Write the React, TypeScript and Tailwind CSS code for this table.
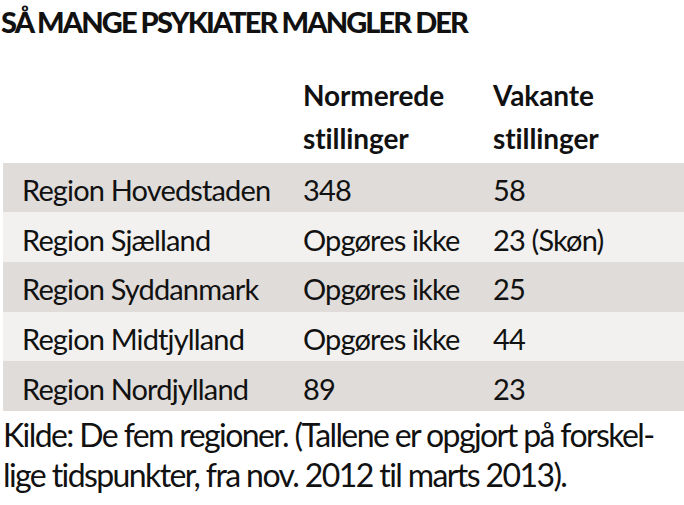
import React from "react";

const rows: [string, string, string][] = [
  ["Region Hovedstaden", "348", "58"],
  ["Region Sjælland", "Opgøres ikke", "23 (Skøn)"],
  ["Region Syddanmark", "Opgøres ikke", "25"],
  ["Region Midtjylland", "Opgøres ikke", "44"],
  ["Region Nordjylland", "89", "23"],
];

export default function App() {
  return (
    <div className="w-[684px] h-[505px] bg-white text-[#111] font-['Lato','Liberation_Sans',sans-serif] overflow-hidden">
      <h1 className="pt-[4px] pl-[1px] text-[29px] leading-[36px] font-black uppercase tracking-[-1.9px] whitespace-nowrap">
        SÅ MANGE PSYKIATER MANGLER DER
      </h1>

      <div className="mt-[34px] grid grid-cols-[300px_190px_1fr] pl-[3px] text-[28px] leading-[43px] font-bold tracking-[-0.1px]">
        <div />
        <div>
          Normerede
          <br />
          stillinger
        </div>
        <div>
          Vakante
          <br />
          stillinger
        </div>
      </div>

      <div className="mt-[2.6px] ml-[3px] flex flex-col">
        {rows.map(([region, norm, vak], i) => (
          <div
            key={region}
            className={`grid grid-cols-[300px_190px_1fr] h-[49.7px] pt-[7.5px] text-[29px] leading-[40px] tracking-[-0.85px] ${
              i % 2 === 0 ? "bg-[#dfdcd9]" : "bg-[#f2f1ef]"
            }`}
          >
            <div className="pl-[19px] whitespace-nowrap">{region}</div>
            <div className="whitespace-nowrap">{norm}</div>
            <div className="whitespace-nowrap">{vak}</div>
          </div>
        ))}
      </div>

      <p className="mt-[4px] pl-[3px] text-[32px] leading-[40px] tracking-[-1.6px] whitespace-nowrap">
        Kilde: De fem regioner. (Tallene er opgjort på forskel-
        <br />
        lige tidspunkter, fra nov. 2012 til marts 2013).
      </p>
    </div>
  );
}
